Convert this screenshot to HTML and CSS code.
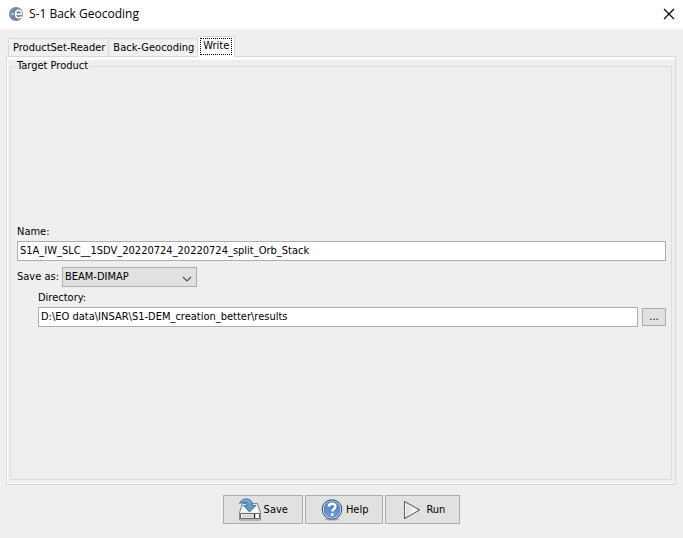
FILE: index.html
```html
<!DOCTYPE html>
<html lang="en">
<head>
<meta charset="utf-8">
<title>S-1 Back Geocoding</title>
<link rel="stylesheet" href="styles.css">
</head>
<body>
<div class="window">
  <header class="titlebar">
    <svg class="app-icon" width="14" height="14" viewBox="0 0 14 14" aria-hidden="true">
      <circle cx="7" cy="7" r="7" fill="#7488aa"/>
      <path d="M6.500 7.200H12.500c.2-2.600-1-4-3-4S6.500 4.700 6.500 7s1.200 3.900 3.300 3.900c1.300 0 2.200-.5 3-1.300" fill="none" stroke="#fff" stroke-width="1.400"/>
      <circle cx="3.700" cy="7" r="1" fill="#e8edf5"/>
      <circle cx="1.500" cy="7" r=".5" fill="#d5deea"/>
    </svg>
    <h1 class="title">S-1 Back Geocoding</h1>
    <button class="close" type="button" aria-label="Close">
      <svg width="12" height="12" viewBox="0 0 12 12"><path d="M1 1l10 10M11 1L1 11" stroke="#000" stroke-width="1.200"/></svg>
    </button>
  </header>
  <main class="content">
    <div class="tabs" role="tablist">
      <button class="tab" type="button" role="tab" aria-selected="false">ProductSet-Reader</button>
      <button class="tab" type="button" role="tab" aria-selected="false">Back-Geocoding</button>
      <button class="tab active" type="button" role="tab" aria-selected="true"><span class="focus">Write</span></button>
    </div>
    <div class="pane" role="tabpanel">
      <fieldset class="group">
        <legend>Target Product</legend>
        <div class="form">
          <label class="label" for="name">Name:</label>
          <input class="field" id="name" type="text" value="S1A_IW_SLC__1SDV_20220724_20220724_split_Orb_Stack">
          <div class="format-row">
            <label for="format">Save as:</label>
            <div class="combo">
              <select id="format"><option>BEAM-DIMAP</option></select>
              <svg class="chevron" width="10" height="6" viewBox="0 0 10 6" aria-hidden="true"><path d="M1 1l4 4 4-4" fill="none" stroke="#555" stroke-width="1.200"/></svg>
            </div>
          </div>
          <div class="directory">
            <label class="label" for="dir">Directory:</label>
            <div class="directory-row">
              <input class="field" id="dir" type="text" value="D:\EO data\INSAR\S1-DEM_creation_better\results">
              <button class="browse" type="button">...</button>
            </div>
          </div>
        </div>
      </fieldset>
    </div>
  </main>
  <footer class="actions">
    <button class="action" type="button">
      <svg width="24" height="24" viewBox="0 0 24 24" aria-hidden="true">
        <path d="M4.500 5.500h15l3 9v7.500h-21v-7.500z" fill="#e9e9e7" stroke="#858585"/>
        <path d="M5.500 7h13l2 7.500h-17z" fill="#f8f8f7"/>
        <path d="M2.500 15.500h19v5h-19z" fill="#fff" stroke="#696969"/>
        <path d="M4 18h11" stroke="#d5d5d5" stroke-width="3"/>
        <path d="M16.500 16v4" stroke="#222" stroke-width="1.400"/>
        <path d="M1.500 5.500C3 2 6 .7 9 1c4 .4 5.500 3 5.500 6.500H18l-6.500 6.500L5.500 7.500H9C9 4.500 6 3.500 1.500 5.500z" fill="#5b9bc8" stroke="#34719f" stroke-width=".9"/>
        <path d="M4 3.500c3-2 7.500-1.500 8.500 2" fill="none" stroke="#91c0df"/>
      </svg>
      <span>Save</span>
    </button>
    <button class="action" type="button">
      <svg width="24" height="24" viewBox="0 0 24 24" aria-hidden="true">
        <defs><linearGradient id="helpFill" x2="0" y2="1"><stop stop-color="#4f79b4"/><stop offset=".5" stop-color="#5e8cc6"/><stop offset="1" stop-color="#789fd2"/></linearGradient></defs>
        <ellipse cx="12" cy="21.500" rx="7" ry="1" fill="#aaa"/>
        <circle cx="12" cy="11.500" r="9.700" fill="#f7faff" stroke="#365f9c" stroke-width="1.200"/>
        <circle cx="12" cy="11.500" r="8" fill="url(#helpFill)" stroke="#3c659f" stroke-width=".6"/>
        <path d="M8.700 8.700C8.700 6.800 10 5.700 12 5.700s3.400 1.100 3.400 2.900c0 2.300-3.100 2.500-3.100 5" fill="none" stroke="#fff" stroke-width="2.400"/>
        <path d="M11 15.300h2.500v2.500h-2.500z" fill="#fff"/>
      </svg>
      <span>Help</span>
    </button>
    <button class="action" type="button">
      <svg width="24" height="24" viewBox="0 0 24 24" aria-hidden="true">
        <defs><linearGradient id="runFill"><stop stop-color="#d9dcda"/><stop offset="1" stop-color="#fff"/></linearGradient></defs>
        <path d="M4.500 3.500v17l15-8.500z" fill="url(#runFill)" stroke="#646464" stroke-width="1.100" stroke-linejoin="round"/>
        <path d="M5.700 5.500v13L17.300 12z" fill="none" stroke="#fff" stroke-width=".8"/>
      </svg>
      <span>Run</span>
    </button>
  </footer>
</div>
</body>
</html>
```
FILE: styles.css
```css
* { box-sizing: border-box; }

body {
  margin: 0;
  background: #efefef;
  color: #000;
  font: 11px/14px Tahoma, "DejaVu Sans Condensed", "Noto Sans", sans-serif;
}

button, input, select {
  margin: 0;
  font: inherit;
  color: inherit;
  border-radius: 0;
}

.window {
  display: flex;
  flex-direction: column;
  min-height: 100vh;
}

.titlebar {
  display: flex;
  align-items: center;
  gap: 6px;
  padding: 0 8px 2px 9px;
  height: 29px;
  background: #fff;
}

.title {
  flex: 1;
  margin: 0;
  font: 12px/16px "Segoe UI", "Open Sans", sans-serif;
}

.close {
  display: flex;
  padding: 0;
  border: 0;
  background: none;
}

.content {
  display: flex;
  flex: 1;
  flex-direction: column;
  padding: 7px 7px 0 6px;
}

.tabs {
  display: flex;
  align-items: flex-end;
  padding-left: 2px;
}

.tab {
  height: 18px;
  padding: 0 3px 0 4px;
  border: 1px solid #d9d9d9;
  border-right: 0;
  border-bottom: 0;
  background: #f0f0f0;
}

.tab.active {
  z-index: 1;
  height: 21px;
  margin-bottom: -1px;
  padding: 1px 2px 2px;
  border-right: 1px solid #d9d9d9;
  background: #fff;
}

.focus {
  display: block;
  height: 17px;
  padding: 0 2px;
  border: 1px dotted #000;
}

.pane {
  display: flex;
  flex: 1;
  padding: 2px 3px 4px;
  border: 1px solid #d9d9d9;
  box-shadow: inset 0 3px #fff, inset 1px -1px #fff;
}

.group {
  display: flex;
  flex: 1;
  min-width: 0;
  margin: 0;
  padding: 0 5px 0 6px;
  border: 1px solid #dcdcdc;
}

.group legend {
  margin-left: -1px;
  padding: 0 1px;
}

.form {
  display: flex;
  flex: 1;
  flex-direction: column;
  justify-content: center;
  min-width: 0;
  padding-bottom: 1px;
}

.label {
  height: 16px;
}

.field {
  width: 100%;
  min-width: 0;
  height: 20px;
  padding: 0 2px;
  border: 1px solid #abadb3;
  background: #fff;
}

.format-row {
  display: flex;
  align-items: center;
  gap: 3px;
  margin: 6px 0 4px;
}

.combo {
  position: relative;
}

.combo select {
  appearance: none;
  width: 135px;
  height: 20px;
  padding: 0 20px 0 2px;
  border: 1px solid #adadad;
  background: #e1e1e1;
}

.chevron {
  position: absolute;
  top: 9px;
  right: 5px;
  pointer-events: none;
}

.directory {
  display: flex;
  flex-direction: column;
  padding-left: 21px;
}

.directory-row {
  display: flex;
  align-items: center;
  gap: 4px;
}

.browse {
  flex: none;
  width: 24px;
  height: 18px;
  padding: 0;
  border: 1px solid #adadad;
  background: #e1e1e1;
}

.actions {
  display: flex;
  justify-content: center;
  gap: 2px;
  padding: 10px 0 14px;
}

.action {
  display: flex;
  align-items: center;
  gap: 2px;
  height: 29px;
  padding: 0 14px;
  border: 1px solid #adadad;
  background: #e1e1e1;
}
```
